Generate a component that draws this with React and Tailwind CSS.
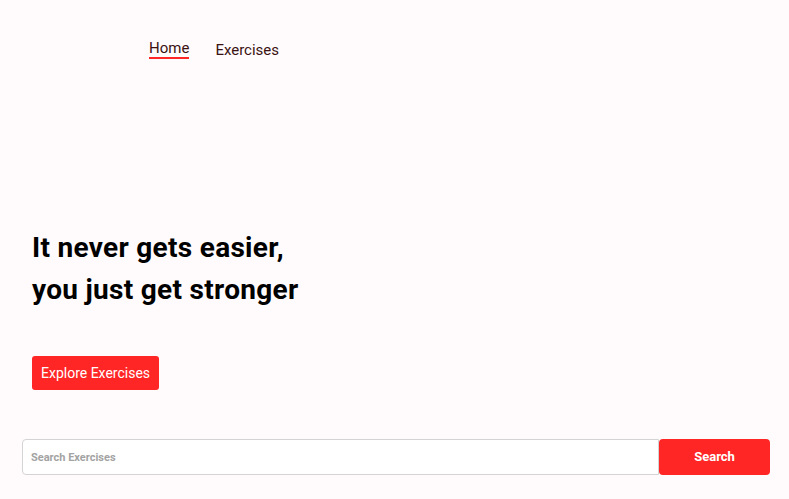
export default function App() {
  return (
    <div className="min-h-screen w-full bg-[#FFFAFB] font-['Roboto',sans-serif]">
      {/* Nav */}
      <nav className="flex items-end gap-[26px] pl-[149px] pt-[39px] text-[15px] text-[#3A1212]">
        <a href="#" className="leading-[18px] border-b-[2px] border-[#FF2625]">
          Home
        </a>
        <a href="#" className="leading-[18px]">
          Exercises
        </a>
      </nav>

      {/* Hero */}
      <section className="pl-[32px] pt-[168px]">
        <h1 className="text-[28px] font-bold leading-[42px] tracking-[0.3px] text-[#000]">
          It never gets easier,
          <br />
          you just get stronger
        </h1>
        <button className="mt-[45px] h-[34px] rounded-[3px] bg-[#FF2625] px-[9px] text-[14px] text-white">
          Explore Exercises
        </button>
      </section>

      {/* Search */}
      <div className="mt-[49px] flex px-[22px] pr-[19px]">
        <input
          placeholder="Search Exercises"
          className="h-[36px] flex-1 rounded-l-[4px] border border-[#d4d4d4] bg-white px-[8px] text-[11px] font-bold text-[#333] outline-none placeholder:text-[#a3a3a3]"
        />
        <button className="h-[36px] w-[111px] rounded-[4px] bg-[#FF2625] text-[13px] font-bold text-white">
          Search
        </button>
      </div>
    </div>
  );
}
